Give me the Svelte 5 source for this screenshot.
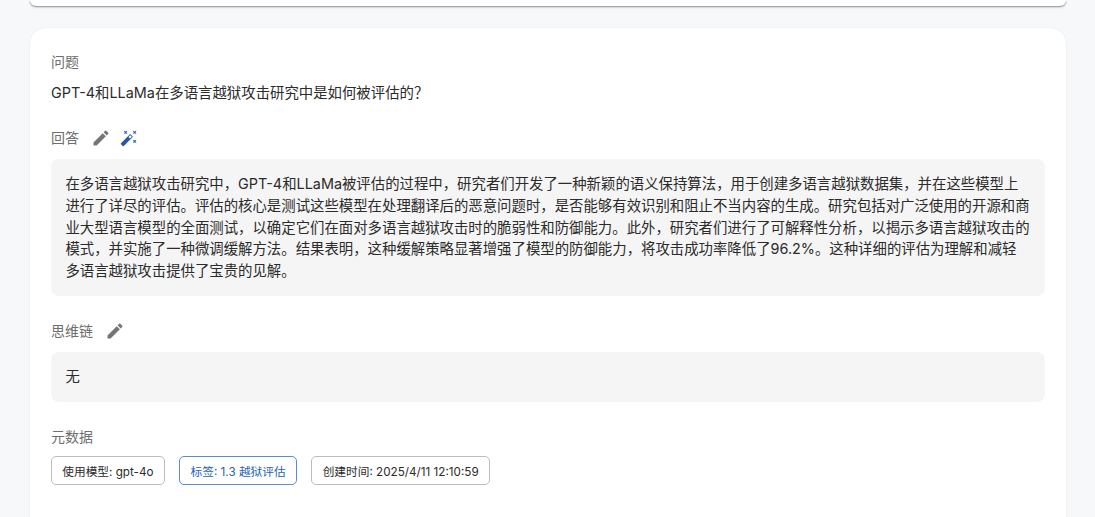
<script lang="ts">
  const editPath =
    "M3 17.25V21h3.75L17.81 9.94l-3.75-3.75L3 17.25zM20.71 7.04c.39-.39.39-1.02 0-1.41l-2.34-2.34a.9959.9959 0 0 0-1.41 0l-1.83 1.83 3.75 3.75 1.83-1.83z";
  const wandPath =
    "M7.5 5.6 10 7 8.6 4.5 10 2 7.5 3.4 5 2l1.4 2.5L5 7zm12 9.8L17 14l1.4 2.5L17 19l2.5-1.4L22 19l-1.4-2.5L22 14zM22 2l-2.5 1.4L17 2l1.4 2.5L17 7l2.5-1.4L22 7l-1.4-2.5zm-7.63 5.29a.9959.9959 0 0 0-1.41 0L1.29 18.96c-.39.39-.39 1.02 0 1.41l2.34 2.34c.39.39 1.02.39 1.41 0L16.7 11.05c.39-.39.39-1.02 0-1.41l-2.33-2.35zm-1.03 5.49-2.12-2.12 2.44-2.44 2.12 2.12-2.44 2.44z";

  const answer =
    "在多语言越狱攻击研究中，GPT-4和LLaMa被评估的过程中，研究者们开发了一种新颖的语义保持算法，用于创建多语言越狱数据集，并在这些模型上进行了详尽的评估。评估的核心是测试这些模型在处理翻译后的恶意问题时，是否能够有效识别和阻止不当内容的生成。研究包括对广泛使用的开源和商业大型语言模型的全面测试，以确定它们在面对多语言越狱攻击时的脆弱性和防御能力。此外，研究者们进行了可解释性分析，以揭示多语言越狱攻击的模式，并实施了一种微调缓解方法。结果表明，这种缓解策略显著增强了模型的防御能力，将攻击成功率降低了96.2%。这种详细的评估为理解和减轻多语言越狱攻击提供了宝贵的见解。";

  const chips = [
    { text: "使用模型: gpt-4o", primary: false },
    { text: "标签: 1.3 越狱评估", primary: true },
    { text: "创建时间: 2025/4/11 12:10:59", primary: false },
  ];
</script>

<div class="page">
  <div class="top-card"></div>

  <div class="detail-card">
    <section class="question">
      <h2 class="label">问题</h2>
      <p class="question-text">GPT-4和LLaMa在多语言越狱攻击研究中是如何被评估的？</p>
    </section>

    <section class="answer">
      <div class="label-row">
        <h2 class="label">回答</h2>
        <button class="icon-btn" aria-label="编辑回答">
          <svg viewBox="0 0 24 24" class="icon"><path d={editPath} /></svg>
        </button>
        <button class="icon-btn icon-btn--wand" aria-label="AI 优化">
          <svg viewBox="0 0 24 24" class="icon"><path d={wandPath} /></svg>
        </button>
      </div>
      <div class="text-box">{answer}</div>
    </section>

    <section class="cot">
      <div class="label-row">
        <h2 class="label">思维链</h2>
        <button class="icon-btn" aria-label="编辑思维链">
          <svg viewBox="0 0 24 24" class="icon"><path d={editPath} /></svg>
        </button>
      </div>
      <div class="text-box">无</div>
    </section>

    <section class="meta">
      <h2 class="label">元数据</h2>
      <div class="chips">
        {#each chips as chip}
          <span class="chip" class:chip--primary={chip.primary}>{chip.text}</span>
        {/each}
      </div>
    </section>
  </div>
</div>

<style>
  :global(body) {
    margin: 0;
    background: #f7f8fa;
    overflow: hidden;
  }

  .page {
    height: 517px;
    overflow: hidden;
    padding: 0 29px 0 30px;
    font-family: Inter, "Noto Sans CJK SC", sans-serif;
    color: #2b2b2b;
    text-spacing-trim: space-all;
  }

  .top-card {
    height: 6px;
    background: #fff;
    border-radius: 0 0 16px 16px;
    box-shadow: 0 1px 2px rgba(0, 0, 0, 0.45);
  }

  .detail-card {
    margin-top: 22px;
    padding: 24px 21px 40px;
    height: 600px;
    background: #fff;
    border-radius: 16px;
    box-shadow: 0 0 2px rgba(0, 0, 0, 0.08);
  }

  .label {
    margin: 0;
    font-size: 14px;
    line-height: 20px;
    font-weight: 400;
    color: #6e6e6e;
  }

  .question-text {
    margin: 10px 0 0;
    font-size: 14.4px;
    line-height: 22px;
  }

  .answer {
    margin-top: 22px;
  }

  .label-row {
    display: flex;
    align-items: center;
    gap: 12px;
    height: 24px;
  }

  .icon-btn {
    display: flex;
    padding: 0;
    border: 0;
    background: none;
    color: #757575;
  }

  .icon-btn--wand {
    color: #2458ab;
    margin-left: -3px;
  }

  .icon {
    width: 20px;
    height: 20px;
    fill: currentColor;
  }

  .icon-btn--wand .icon {
    width: 18px;
    height: 18px;
  }

  .text-box {
    margin-top: 9px;
    padding: 14.4px;
    background: #f5f5f5;
    border-radius: 8px;
    font-size: 14.4px;
    line-height: 21.6px;
  }

  .cot {
    margin-top: 23px;
  }

  .meta {
    margin-top: 25px;
  }

  .chips {
    display: flex;
    gap: 14.4px;
    margin-top: 9px;
  }

  .chip {
    display: flex;
    align-items: center;
    height: 29px;
    box-sizing: border-box;
    padding: 0 10.3px;
    border: 1px solid #bdbdbd;
    border-radius: 5px;
    font-size: 11.7px;
  }

  .chip--primary {
    border-color: #5b8bd0;
    color: #2563b0;
  }
</style>
